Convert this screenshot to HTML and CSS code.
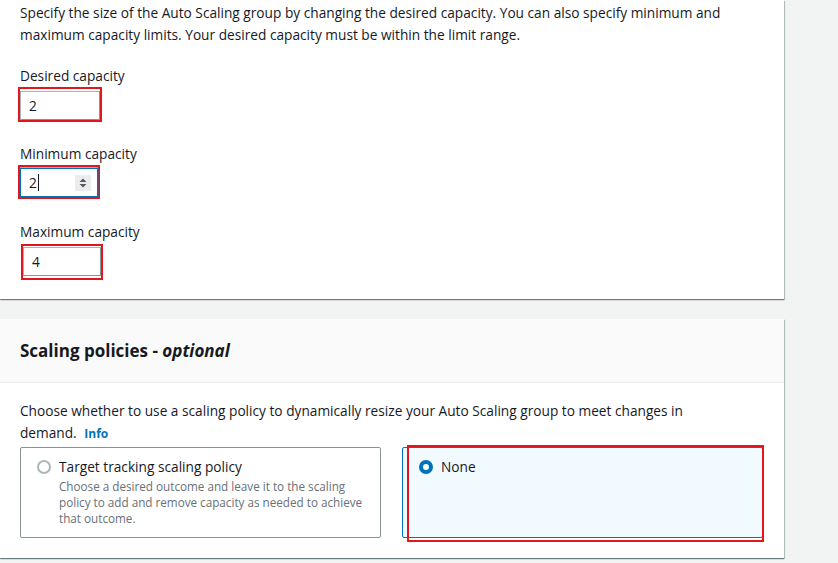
FILE: index.html
```html
<!DOCTYPE html>
<html>
<head>
<meta charset="utf-8">
<link rel="stylesheet" href="styles.css">
</head>
<body>
<div class="page">
  <section class="card card-first">
    <div class="card-body first-body">
      <p class="text">Specify the size of the Auto Scaling group by changing the desired capacity. You can also specify minimum and maximum capacity limits. Your desired capacity must be within the limit range.</p>
      <div class="field">
        <div class="label">Desired capacity</div>
        <div class="mark mark-a">
          <div class="input">2</div>
        </div>
      </div>
      <div class="field">
        <div class="label">Minimum capacity</div>
        <div class="mark mark-b">
          <div class="input input-focus">
            <span class="value">2</span><span class="caret"></span>
            <span class="spinner">
              <svg width="16" height="16" viewBox="0 0 16 16"><rect width="16" height="16" fill="#ececec"/><path d="M4.5 7 L8 3.5 L11.5 7 Z" fill="#545b64"/><path d="M4.5 9 L8 12.5 L11.5 9 Z" fill="#545b64"/></svg>
            </span>
          </div>
        </div>
      </div>
      <div class="field field-last">
        <div class="label">Maximum capacity</div>
        <div class="mark mark-c">
          <div class="input">4</div>
        </div>
      </div>
    </div>
  </section>

  <section class="card card-second">
    <header class="card-header">
      <h2 class="title">Scaling policies - <i>optional</i></h2>
    </header>
    <div class="card-body second-body">
      <p class="text text-narrow"><span>Choose whether to use a scaling policy to dynamically resize your Auto Scaling group to meet changes in</span><br><span>demand.</span> <a class="info">Info</a></p>
      <div class="tiles">
        <div class="tile">
          <span class="radio"></span>
          <div class="tile-text">
            <div class="tile-title">Target tracking scaling policy</div>
            <div class="tile-desc">Choose a desired outcome and leave it to the scaling policy to add and remove capacity as needed to achieve that outcome.</div>
          </div>
        </div>
        <div class="tile tile-selected">
          <span class="radio radio-on"></span>
          <div class="tile-text">
            <div class="tile-title">None</div>
          </div>
          <span class="tile-mark"></span>
        </div>
      </div>
    </div>
  </section>
</div>
</body>
</html>
```

FILE: styles.css
```css
* { box-sizing: border-box; }
html, body { margin: 0; padding: 0; }
body {
  background: #f2f3f3;
  font-family: "Open Sans", "Noto Sans", sans-serif;
  color: #16191f;
  font-size: 13.7px;
  width: 838px;
  height: 563px;
  overflow: hidden;
}
.page {
  width: 784px;
  display: flex;
  flex-direction: column;
  gap: 20px;
}
.card {
  background: #fff;
  box-shadow: 0 1px 1px 0 rgba(0,28,36,0.45), 1px 1px 1px 0 rgba(0,28,36,0.2);
}
.card-body { padding: 0 20px 20px 20px; }
.first-body { padding-top: 2px; padding-bottom: 19px; }
.text { margin: 0; line-height: 22px; }
.text-narrow { max-width: 720px; }
.field { margin-top: 19px; }
.field + .field { margin-top: 21px; }
.field-last { margin-top: 22px !important; }
.label { line-height: 22px; }
.mark {
  display: inline-block;
  border: 2px solid #e3161e;
  padding-top: 2px;
  vertical-align: top;
}
.mark-a { margin-left: -2px; }
.mark-b { margin-left: -2px; padding-top: 1px; padding-bottom: 0; }
.mark-c { margin-left: 1px; margin-top: 1px; padding-top: 1px; padding-bottom: 2px; }
.input {
  width: 80px;
  height: 29px;
  border: 1px solid #aab7b8;
  border-right-color: #879596;
  border-bottom-color: #879596;
  padding-left: 8px;
  line-height: 27px;
  position: relative;
}
.mark-b .input { width: 78px; }
.mark-c .input { width: 78px; }
.input-focus {
  border: 1px solid #0073bb;
  box-shadow: 0 0 0 0.5px #0073bb;
  display: flex;
  align-items: center;
}
.value { line-height: 27px; }
.caret {
  display: inline-block;
  width: 1px;
  height: 17px;
  background: #16191f;
  margin-left: 1px;
}
.spinner {
  position: absolute;
  right: 6px;
  top: 6px;
  width: 16px;
  height: 16px;
  display: block;
}
.spinner svg { display: block; }

.card-header {
  background: #fafafa;
  border-bottom: 1px solid #eaeded;
  padding: 20px 20px 19px 20px;
}
.title {
  margin: 0;
  font-size: 17px;
  font-weight: 700;
  line-height: 24px;
  color: #16191f;
}
.title i { font-weight: 700; }
.second-body { padding-top: 17px; padding-bottom: 20px; }
.info {
  display: inline-block;
  line-height: 18px;
  color: #0073bb;
  font-weight: 700;
  font-size: 12px;
  margin-left: 4px;
}
.tiles {
  margin-top: 3px;
  display: grid;
  grid-template-columns: 361px 361px;
  column-gap: 21px;
}
.tile {
  position: relative;
  border: 1px solid #879596;
  border-radius: 2px;
  padding: 8px 16px 11px 16px;
  display: flex;
  gap: 8px;
  align-items: flex-start;
}
.tile-selected {
  border-color: #0073bb;
  background: #f1faff;
}
.radio {
  flex: none;
  width: 14px;
  height: 14px;
  border-radius: 50%;
  border: 2px solid #aab7b8;
  margin-top: 4px;
  background: #fff;
}
.radio-on {
  border: 4px solid #0073bb;
  background: #fff;
}
.tile-title { line-height: 22px; }
.tile-desc {
  font-size: 11.7px;
  line-height: 16px;
  color: #687078;
}
.tile-mark {
  position: absolute;
  left: 4px;
  top: -3px;
  right: -2px;
  bottom: -5px;
  border: 2px solid #e3161e;
}
```
